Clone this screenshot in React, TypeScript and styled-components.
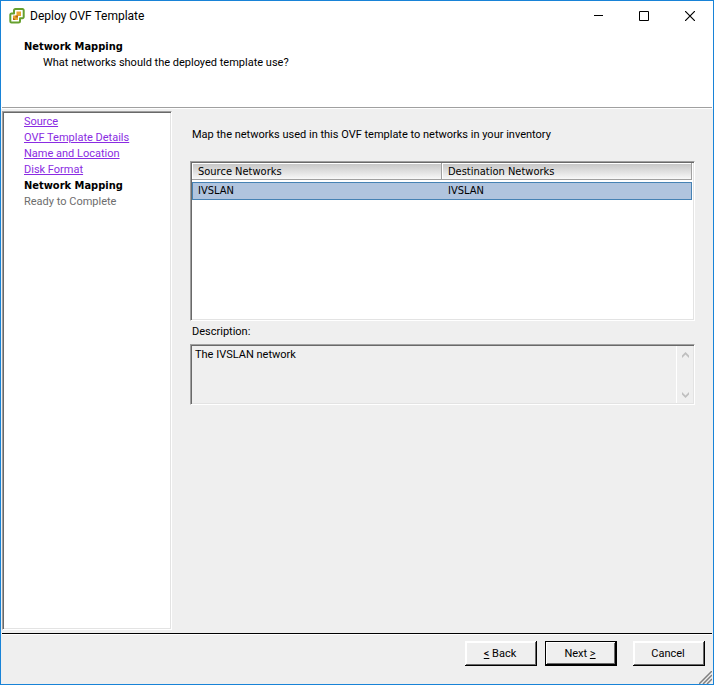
import React from "react";
import styled, { createGlobalStyle, css } from "styled-components";

const wideFont = `"DejaVu Sans Condensed", "DejaVu Sans", sans-serif`;

const GlobalStyle = createGlobalStyle`
  *, *::before, *::after { box-sizing: border-box; }
  body {
    margin: 0;
    background: #efefef;
    color: #000;
    font: 11px/16px Roboto, sans-serif;
  }
  button, textarea { font: inherit; color: inherit; }
`;

const sunken = css`
  border: 1px solid;
  border-color: #a0a0a0 #fff #fff #a0a0a0;
  box-shadow: inset 1px 1px #696969, inset -1px -1px #e3e3e3;
  padding: 1px;
`;

const Dialog = styled.div`
  display: flex;
  flex-direction: column;
  min-height: 100vh;
  border: 1px solid #1883d7;
`;

const TitleBar = styled.header`
  display: flex;
  align-items: center;
  height: 29px;
  padding-left: 8px;
  background: #fff;
`;

const Title = styled.h1`
  flex: 1;
  margin: 0 0 0 5px;
  font-size: 12px;
  font-weight: normal;
`;

const CaptionButton = styled.button`
  display: flex;
  align-items: center;
  justify-content: center;
  width: 46px;
  height: 28px;
  padding: 0;
  border: 0;
  background: none;
`;

const Intro = styled.section`
  height: 77px;
  margin: 0 1px;
  padding: 8px 22px;
  background: #fff;
  border-bottom: 1px solid #a0a0a0;
`;

const IntroBand = styled.div`
  background: #fff;
  padding: 1px 0;
`;

const StepTitle = styled.h2`
  margin: 0;
  font-family: ${wideFont};
  font-size: 11px;
`;

const StepHint = styled.p`
  margin: 0 0 0 19px;
`;

const Body = styled.main`
  display: flex;
  flex: 1;
  padding: 2px 18px 3px 1px;
`;

const Sidebar = styled.nav`
  ${sunken}
  width: 170px;
  background: #fff;
`;

const Steps = styled.ol`
  margin: 0;
  padding: 1px 0 0 20px;
  list-style: none;
`;

const Step = styled.li<{ $state?: "current" | "pending" }>`
  height: 16px;
  color: ${(p) => (p.$state === "pending" ? "#6d6d6d" : "#000")};
  ${(p) =>
    p.$state === "current" &&
    css`
      font-family: ${wideFont};
      font-weight: bold;
    `}
`;

const StepLink = styled.a`
  color: #8a2be2;
  text-decoration: underline;
`;

const Content = styled.div`
  flex: 1;
  min-width: 0;
  margin-left: 18px;
  padding-top: 16px;
`;

const Prompt = styled.p`
  margin: 0 0 18px 2px;
`;

const GridFrame = styled.div`
  ${sunken}
  height: 160px;
  padding-right: 2px;
  background: #fff;
`;

const NetworkTable = styled.table`
  width: 100%;
  table-layout: fixed;
  border-collapse: separate;
  border-spacing: 0;
  font-family: ${wideFont};
`;

const HeadCell = styled.th`
  height: 17px;
  padding: 0 6px;
  border: solid #a0a0a0;
  border-width: 0 1px 1px 0;
  box-shadow: inset 1px 1px #fff;
  background: linear-gradient(#c4c4c4, #f8f8f8);
  font-weight: normal;
  line-height: 15px;
  text-align: left;
`;

const Spacer = styled.td`
  height: 2px;
  padding: 0;
`;

const Cell = styled.td`
  height: 18px;
  padding: 0 6px;
  border: solid #4682b4;
  border-width: 1px 0;
  background: #b0c4de;
  line-height: 16px;
  &:first-child { border-left-width: 1px; padding-left: 5px; }
  &:last-child { border-right-width: 1px; }
`;

const DescriptionLabel = styled.label`
  display: block;
  margin: 3px 0 4px 2px;
`;

const DescriptionFrame = styled.div`
  ${sunken}
  display: flex;
  height: 61px;
`;

const Description = styled.textarea`
  flex: 1;
  min-width: 0;
  padding: 1px 3px 0;
  border: 0;
  background: transparent;
  resize: none;
  overflow: hidden;
  outline: 0;
`;

const ScrollRail = styled.div`
  display: flex;
  flex-direction: column;
  justify-content: space-between;
  width: 17px;
  border-left: 1px solid #fff;
`;

const ScrollButton = styled.button`
  display: flex;
  align-items: center;
  justify-content: center;
  height: 17px;
  padding: 0;
  border: 0;
  background: none;
`;

const Footer = styled.footer`
  display: flex;
  align-items: flex-start;
  justify-content: flex-end;
  gap: 8px;
  position: relative;
  height: 51px;
  margin: 0 1px;
  padding: 6px 7px 0;
  border-top: 1px solid #000;
  box-shadow: inset 0 1px #fff;
`;

const WizardButton = styled.button<{ $primary?: boolean }>`
  width: 72px;
  height: 25px;
  margin-top: 1px;
  padding: 1px 2px 0 0;
  border: 0;
  background: #efefef;
  box-shadow: ${(p) =>
    p.$primary
      ? "inset 0 0 0 1px #000, inset -2px -2px #000, inset 2px 2px #fff, inset -3px -3px #696969"
      : "inset -1px -1px #000, inset 1px 1px #fff, inset -2px -2px #696969, inset 2px 2px #fff"};
`;

const CancelButton = styled(WizardButton)`
  margin-left: 8px;
`;

const Grip = styled.svg`
  position: absolute;
  right: 0;
  bottom: 0;
`;

const AppIcon = () => (
  <svg width="16" height="16" viewBox="0 0 16 16" aria-hidden="true">
    <path
      d="M6.500 1H13.500a1.200 1.200 0 0 1 1.200 1.200V9a1.200 1.200 0 0 1-1.200 1.200H11v2.800A1.500 1.500 0 0 1 9.500 14.500H2.500a1.200 1.200 0 0 1-1.200-1.200V6.700a1.200 1.200 0 0 1 1.200-1.200H5V2.500A1.500 1.500 0 0 1 6.500 1Z"
      fill="#fff" stroke="#66a02e" strokeWidth="2" strokeLinejoin="round"
    />
    <path d="M7.500 3.500H12V8H9V12H4V7.500h3.500Z" fill="#e8a62c" />
    <path d="M6.500 7.500H9V9.500H6.500Z" fill="#b8660f" />
    <path d="M4 9.500 6.500 12H4Z" fill="#b8660f" />
  </svg>
);

const Chevron = ({ down = false }: { down?: boolean }) => (
  <svg width="7" height="6" viewBox="0 0 7 6" aria-hidden="true">
    <path
      d={down ? "M0 0 3.500 3.500 7 0V2.500L3.500 6 0 2.500Z" : "M0 6 3.500 2.500 7 6V3.500L3.500 0 0 3.500Z"}
      fill="#bfbfbf"
    />
  </svg>
);

const finished = ["Source", "OVF Template Details", "Name and Location", "Disk Format"];
const networks = [{ source: "IVSLAN", destination: "IVSLAN" }];

export default function App() {
  return (
    <>
      <GlobalStyle />
      <Dialog role="dialog" aria-labelledby="dialog-title">
        <TitleBar>
          <AppIcon />
          <Title id="dialog-title">Deploy OVF Template</Title>
          <CaptionButton aria-label="Minimize">
            <svg width="10" height="10"><path d="M1 4.500h10" stroke="#000" /></svg>
          </CaptionButton>
          <CaptionButton aria-label="Maximize">
            <svg width="10" height="10"><path d="M.5.500h9v9h-9z" fill="none" stroke="#000" /></svg>
          </CaptionButton>
          <CaptionButton aria-label="Close">
            <svg width="10" height="10"><path d="m0 0 10 10M10 0 0 10" stroke="#000" strokeWidth="1.200" /></svg>
          </CaptionButton>
        </TitleBar>
        <IntroBand>
          <Intro>
            <StepTitle>Network Mapping</StepTitle>
            <StepHint>What networks should the deployed template use?</StepHint>
          </Intro>
        </IntroBand>
        <Body>
          <Sidebar aria-label="Steps">
            <Steps>
              {finished.map((name) => (
                <Step key={name}><StepLink href="#">{name}</StepLink></Step>
              ))}
              <Step $state="current" aria-current="step">Network Mapping</Step>
              <Step $state="pending">Ready to Complete</Step>
            </Steps>
          </Sidebar>
          <Content>
            <Prompt>Map the networks used in this OVF template to networks in your inventory</Prompt>
            <GridFrame>
              <NetworkTable>
                <thead>
                  <tr>
                    <HeadCell scope="col">Source Networks</HeadCell>
                    <HeadCell scope="col">Destination Networks</HeadCell>
                  </tr>
                </thead>
                <tbody>
                  <tr aria-hidden="true"><Spacer colSpan={2} /></tr>
                  {networks.map((n) => (
                    <tr key={n.source} aria-selected="true">
                      <Cell>{n.source}</Cell>
                      <Cell>{n.destination}</Cell>
                    </tr>
                  ))}
                </tbody>
              </NetworkTable>
            </GridFrame>
            <DescriptionLabel htmlFor="description">Description:</DescriptionLabel>
            <DescriptionFrame>
              <Description id="description" readOnly value="The IVSLAN network" />
              <ScrollRail>
                <ScrollButton disabled aria-label="Scroll up"><Chevron /></ScrollButton>
                <ScrollButton disabled aria-label="Scroll down"><Chevron down /></ScrollButton>
              </ScrollRail>
            </DescriptionFrame>
          </Content>
        </Body>
        <Footer>
          <WizardButton><u>&lt;</u> Back</WizardButton>
          <WizardButton $primary>Next <u>&gt;</u></WizardButton>
          <CancelButton>Cancel</CancelButton>
          <Grip width="13" height="13" viewBox="0 0 13 13" aria-hidden="true">
            <path d="M0 13 13 0M4 13l9-9M8 13l5-5" stroke="#808080" strokeWidth="1.500" />
          </Grip>
        </Footer>
      </Dialog>
    </>
  );
}
